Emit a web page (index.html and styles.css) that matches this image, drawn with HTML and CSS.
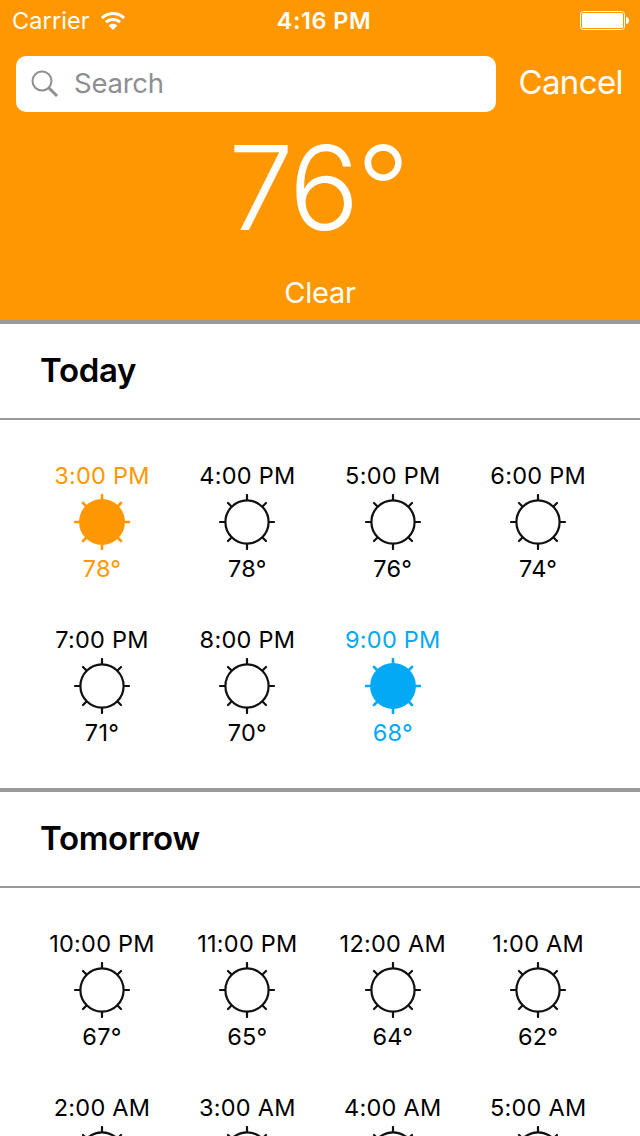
FILE: index.html
```html
<!DOCTYPE html>
<html lang="en">
<head>
<meta charset="utf-8">
<title>Weather</title>
<link rel="stylesheet" href="styles.css">
</head>
<body>
<svg class="defs" width="0" height="0" aria-hidden="true">
  <symbol id="sun" viewBox="0 0 56 56">
    <circle class="disc" cx="28" cy="28" r="21.600"/>
    <path d="M28 6V1M28 50v5M6 28H1M50 28h5M12.500 12.500L9 9M43.500 12.500L47 9M12.500 43.500L9 47M43.500 43.500L47 47"/>
  </symbol>
</svg>
<header class="hero">
  <div class="status">
    <div class="network">
      <span class="carrier">Carrier</span>
      <svg class="wifi" width="26" height="20" viewBox="0 0 26 20">
        <path class="arc" d="M2.000 7.100A15.500 15.500 0 0 1 24 7.100M6 11.300A10 10 0 0 1 20 11.300"/>
        <path class="dot" d="M13 19L8.600 14.600A6.300 6.300 0 0 1 17.400 14.600Z"/>
      </svg>
    </div>
    <span class="clock">4:16 PM</span>
    <svg class="battery" width="50" height="20" viewBox="0 0 50 20">
      <rect class="shell" x="0.500" y="0.500" width="44" height="18" rx="2.800"/>
      <rect x="2" y="2" width="41" height="15" rx="1.500"/>
      <path d="M46 6c2 0 3 1.500 3 3.500s-1 3.500-3 3.500z"/>
    </svg>
  </div>
  <div class="searchbar">
    <div class="field">
      <svg class="glass" width="28" height="28" viewBox="0 0 28 28">
        <circle cx="11" cy="11" r="9.500"/>
        <path d="M17.700 17.700L26 26"/>
      </svg>
      <span class="placeholder">Search</span>
    </div>
    <span class="cancel">Cancel</span>
  </div>
  <div class="now">76°</div>
  <div class="condition">Clear</div>
</header>
<main>
  <section class="day">
    <h2>Today</h2>
    <div class="hours">
      <div class="hour warmest"><span>3:00 PM</span><svg class="sun"><use href="#sun"/></svg><span>78°</span></div>
      <div class="hour"><span>4:00 PM</span><svg class="sun"><use href="#sun"/></svg><span>78°</span></div>
      <div class="hour"><span>5:00 PM</span><svg class="sun"><use href="#sun"/></svg><span>76°</span></div>
      <div class="hour"><span>6:00 PM</span><svg class="sun"><use href="#sun"/></svg><span>74°</span></div>
      <div class="hour"><span>7:00 PM</span><svg class="sun"><use href="#sun"/></svg><span>71°</span></div>
      <div class="hour"><span>8:00 PM</span><svg class="sun"><use href="#sun"/></svg><span>70°</span></div>
      <div class="hour coolest"><span>9:00 PM</span><svg class="sun"><use href="#sun"/></svg><span>68°</span></div>
    </div>
  </section>
  <section class="day">
    <h2>Tomorrow</h2>
    <div class="hours">
      <div class="hour"><span>10:00 PM</span><svg class="sun"><use href="#sun"/></svg><span>67°</span></div>
      <div class="hour"><span>11:00 PM</span><svg class="sun"><use href="#sun"/></svg><span>65°</span></div>
      <div class="hour"><span>12:00 AM</span><svg class="sun"><use href="#sun"/></svg><span>64°</span></div>
      <div class="hour"><span>1:00 AM</span><svg class="sun"><use href="#sun"/></svg><span>62°</span></div>
      <div class="hour"><span>2:00 AM</span><svg class="sun"><use href="#sun"/></svg></div>
      <div class="hour"><span>3:00 AM</span><svg class="sun"><use href="#sun"/></svg></div>
      <div class="hour"><span>4:00 AM</span><svg class="sun"><use href="#sun"/></svg></div>
      <div class="hour"><span>5:00 AM</span><svg class="sun"><use href="#sun"/></svg></div>
    </div>
  </section>
</main>
</body>
</html>
```

FILE: styles.css
```css
* { box-sizing: border-box; }

body {
  margin: 0;
  height: 1136px;
  overflow: hidden;
  background: #fff;
  color: #000;
  font-family: Inter, "Liberation Sans", sans-serif;
}

main { height: 816px; overflow: hidden; }

svg { display: block; flex: none; }
.defs { position: absolute; }

.hero {
  height: 320px;
  background: #ff9800;
  color: #fff;
  display: flex;
  flex-direction: column;
}
.hero > * { flex: none; }

.status {
  height: 56px;
  padding: 0 10px 14px 12px;
  display: grid;
  grid-template-columns: 1fr auto 1fr;
  align-items: center;
  line-height: 28px;
}
.network { display: flex; align-items: center; gap: 10px; }
.carrier { font-size: 23.500px; letter-spacing: 0.100px; width: 78px; }
.wifi { margin-top: -1px; }
.wifi .arc { fill: none; stroke: #fff; stroke-width: 3; }
.wifi .dot { fill: #fff; }
.clock { font-size: 23.500px; font-weight: 600; letter-spacing: 0.500px; margin-left: 6px; }
.battery { justify-self: end; fill: #fff; }
.battery .shell { fill: none; stroke: #fff; }

.searchbar { height: 56px; padding: 0 17px 0 16px; display: flex; justify-content: space-between; }
.field {
  width: 480px;
  height: 56px;
  padding-left: 15px;
  border-radius: 10px;
  background: #fff;
  color: #8e8e93;
  display: flex;
  align-items: center;
  gap: 15px;
}
.glass { fill: none; stroke: #8e8e93; stroke-width: 2; }
.glass path { stroke-width: 3; }
.placeholder { font-size: 27.500px; line-height: 54px; letter-spacing: -0.250px; padding-bottom: 2px; }
.cancel { font-size: 33px; line-height: 53px; letter-spacing: -0.600px; }

.now { font-size: 117px; line-height: 152px; font-weight: 300; text-align: center; letter-spacing: -3px; padding-right: 5px; }
.condition { font-size: 29px; line-height: 57px; text-align: center; letter-spacing: -0.200px; }

.day { height: 468px; border-top: 4px solid #999; }
.day h2 {
  margin: 0;
  height: 96px;
  padding-left: 40px;
  border-bottom: 2px solid #999;
  font-size: 33px;
  line-height: 93px;
  font-weight: 600;
  letter-spacing: -0.300px;
}
.hours {
  padding: 42px 29.300px 0;
  display: grid;
  grid-template-columns: repeat(4, 145.400px);
  grid-auto-rows: 164px;
}
.hour {
  display: flex;
  flex-direction: column;
  align-items: center;
  font-size: 23.500px;
  line-height: 28px;
  letter-spacing: 0.250px;
  white-space: nowrap;
}
.sun {
  width: 56px;
  height: 56px;
  margin: 4px 0 5px;
  fill: none;
  stroke: #111;
  stroke-width: 2.200;
  stroke-linecap: round;
}
.warmest { color: #ff9800; }
.warmest .sun { fill: #ff9800; stroke: #ff9800; stroke-width: 2.600; }
.coolest { color: #03a9f4; }
.coolest .sun { fill: #03a9f4; stroke: #03a9f4; stroke-width: 2.600; }
```
